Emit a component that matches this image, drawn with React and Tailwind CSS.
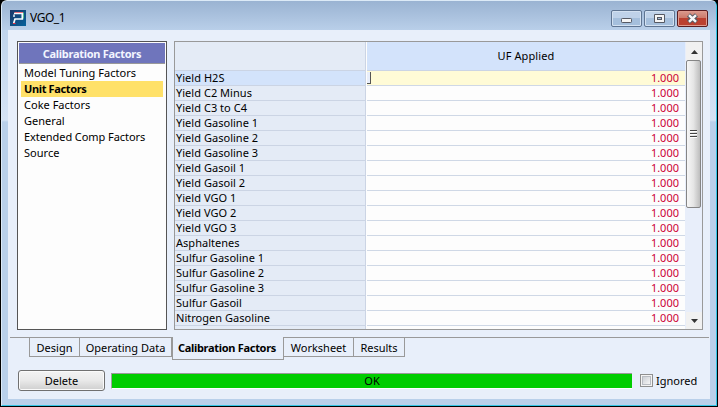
import React from "react";

const sections = [
  { label: "Model Tuning Factors", cls: "tracking-[0.04px]" },
  { label: "Unit Factors", active: true, cls: "font-bold tracking-[-0.36px]" },
  { label: "Coke Factors", cls: "tracking-[0.02px]" },
  { label: "General", cls: "tracking-[0.02px]" },
  { label: "Extended Comp Factors", cls: "tracking-[-0.07px]" },
  { label: "Source", cls: "tracking-[0.02px]" },
];

const rows = [
  "Yield H2S", "Yield C2 Minus", "Yield C3 to C4", "Yield Gasoline 1", "Yield Gasoline 2",
  "Yield Gasoline 3", "Yield Gasoil 1", "Yield Gasoil 2", "Yield VGO 1", "Yield VGO 2",
  "Yield VGO 3", "Asphaltenes", "Sulfur Gasoline 1", "Sulfur Gasoline 2", "Sulfur Gasoline 3",
  "Sulfur Gasoil", "Nitrogen Gasoline",
];

const tabs = [
  { label: "Design", cls: "w-[51px] h-5 pt-[3px] border-l border-t" },
  { label: "Operating Data", cls: "w-[92px] h-5 pt-[3px] border-t" },
  { label: "Calibration Factors", cls: "w-[112px] h-[23px] pt-[4px] pr-[2px] border-l font-bold tracking-[-0.3px]" },
  { label: "Worksheet", cls: "w-[70px] h-5 pt-[3px] border-t" },
  { label: "Results", cls: "w-[51px] h-5 pt-[3px] border-t" },
];

function AppIcon() {
  return (
    <svg width="16" height="16" viewBox="0 0 16 16" className="block">
      <defs>
        <linearGradient id="logo" x1="0" y1="0" x2="1" y2="1">
          <stop offset="0" stopColor="#1b3566" />
          <stop offset="1" stopColor="#06629c" />
        </linearGradient>
      </defs>
      <rect width="16" height="16" fill="url(#logo)" />
      <path d="M4.5 2.5H13" fill="none" stroke="#e84552" strokeWidth="1" />
      <path d="M13.5 2.5V8.5" fill="none" stroke="#3fb27c" strokeWidth="1" />
      <path d="M4 3.5H12.3V9H5L3.6 13.5" fill="none" stroke="#f4fbff" strokeWidth="1.7" />
      <path d="M4 4.5V7" fill="none" stroke="#f4fbff" strokeWidth="1.4" />
      <path d="M3 13.5H5.5" fill="none" stroke="#ee3040" strokeWidth="1" />
    </svg>
  );
}

function TitleBar() {
  const button =
    "flex h-[17px] w-[31px] items-center justify-center rounded-[2px] border border-[#5f7592] bg-linear-to-b from-[#bfd2e9] from-50% to-[#a5bfdc] to-50% shadow-[inset_0_0_0_1px_#d3e1f1]";
  return (
    <div className="flex h-[29px] shrink-0 bg-linear-to-b from-[#9ab3d2] to-[#b9cfe9] pl-[8px]">
      <div className="pt-[9px]"><AppIcon /></div>
      <div className="ml-[4px] mt-[9px] text-[12px] leading-[16px] tracking-[-0.45px]">VGO_1</div>
      <div className="ml-auto mr-[8px] mt-[9px] flex gap-[2px]">
        <div className={button}>
          <svg width="12" height="13" viewBox="0 0 12 13"><rect x="0.5" y="6.5" width="10" height="4" rx="0.8" fill="#f5f5f5" stroke="#555963" /></svg>
        </div>
        <div className={button}>
          <svg width="11" height="13" viewBox="0 0 11 13"><path d="M0.5 2.5H10.5V10.5H0.5Z" fill="#f5f5f5" stroke="#555963" /><rect x="3.5" y="5.5" width="4" height="2" fill="#a9bfdb" stroke="#555963" /></svg>
        </div>
        <div className="flex h-[17px] w-[31px] items-center justify-center rounded-[2px] border border-[#5b1c20] bg-linear-to-b from-[#d99a8e] from-0% via-[#cc7667] via-50% to-[#bb4030] to-50% shadow-[inset_0_0_0_1px_#df9a8d]">
          <svg width="13" height="11" viewBox="0 0 13 11">
            <path d="M2.5 2L10.5 9M10.5 2L2.5 9" stroke="#555963" strokeWidth="4.6" />
            <path d="M3 2.2L10 8.8M10 2.2L3 8.8" stroke="#f7f7f7" strokeWidth="2.5" />
          </svg>
        </div>
      </div>
    </div>
  );
}

function Sidebar() {
  return (
    <div className="h-[289px] w-[150px] border border-[#555] bg-[#fdfdfd] p-px">
      <div className="flex h-[21px] items-center justify-center border-b border-[#999] bg-[#6f75bc] pt-[2px] font-bold tracking-[-0.28px] text-[#f3f5ff]">
        Calibration Factors
      </div>
      <div className="mx-[2px] mt-px">
        {sections.map((s) => (
          <div key={s.label} className={`h-4 whitespace-nowrap pl-[3px] leading-[16px] ${s.cls} ${s.active ? "bg-[#ffe169]" : ""}`}>
            {s.label}
          </div>
        ))}
      </div>
    </div>
  );
}

function ScrollBar() {
  return (
    <div className="flex w-4 flex-col bg-[#e8eefa]">
      <div className="flex h-[18px] items-center justify-center bg-[#f1f1f1] pt-[2px]">
        <svg width="7" height="4" viewBox="0 0 7 4"><path d="M0 4L3.5 0L7 4Z" fill="#333" /></svg>
      </div>
      <div className="flex h-[148px] w-[15px] flex-col items-center justify-center gap-px rounded-[2px] border border-[#858585] bg-linear-to-r from-[#f7f7f7] via-[#e5e5e5] to-[#bdbdbd]">
        <div className="h-[2px] w-[7px] border-t border-[#444] bg-white" />
        <div className="h-[2px] w-[7px] border-t border-[#444] bg-white" />
        <div className="h-[2px] w-[7px] border-t border-[#444] bg-white" />
      </div>
      <div className="mt-auto flex h-[17px] items-center justify-center bg-[#f1f1f1]">
        <svg width="7" height="4" viewBox="0 0 7 4"><path d="M0 0L3.5 4L7 0Z" fill="#333" /></svg>
      </div>
    </div>
  );
}

function FactorTable() {
  return (
    <div className="flex h-[289px] w-[529px] border border-[#999] bg-[#fdfdfd]">
      <div className="w-[191px] shrink-0 overflow-hidden border-r border-[#cbd4e4] bg-[#e4ebf6]">
        <div className="h-[29px] border-b border-[#cbd4e4]" />
        {rows.map((r, i) => (
          <div key={r} className={`h-[15px] whitespace-nowrap border-b border-[#cbd4e4] pl-px leading-[14px] tracking-[0.03px] ${i === 0 ? "bg-[#d3e3fb]" : ""}`}>
            {r}
          </div>
        ))}
      </div>
      <div className="ml-px w-[318px] shrink-0 overflow-hidden">
        <div className="flex h-[29px] items-center justify-center border-b border-[#cbd4e4] bg-[#d3e3fb] tracking-[0.1px]">UF Applied</div>
        {rows.map((r, i) => (
          <div key={r} className={`flex h-[15px] border-b border-[#cfd8e6] pr-[6px] leading-[14px] text-[#cc0036] ${i === 0 ? "bg-[#fffbd6]" : ""}`}>
            {i === 0 && <div className="mt-px h-3 w-1 border-b border-r border-[#555] bg-[#e8eefa]" />}
            <div className="ml-auto">1.000</div>
          </div>
        ))}
      </div>
      <div className="w-px bg-[#e8eefa]" />
      <ScrollBar />
    </div>
  );
}

export default function App() {
  return (
    <div className="h-[407px] w-[718px] overflow-hidden bg-black pl-px font-['Noto_Sans','Open_Sans',sans-serif] text-[11px] leading-[14px] text-black">
      <div className="flex h-[406px] w-[716px] flex-col overflow-hidden rounded-t-[6px] border border-b-[#35c5e5] border-l-[#dceaf7] border-r-[#35c5e5] border-t-[#dceaf7] bg-linear-to-b from-[#b9cfe9] from-0% via-[#d5e3f4] via-[119px] to-[#b9d0ea] to-[121px]">
        <TitleBar />
        <div className="ml-[6px] mr-[6px] flex h-[369px] shrink-0 flex-col bg-[#e8effa]">
          <div className="flex gap-[7px] pl-[9px] pt-[11px]">
            <Sidebar />
            <FactorTable />
          </div>
          <div className="ml-[2px] mr-px mt-[7px] flex h-[23px] shrink-0 items-start">
            <div className="w-[19px] border-t border-[#999]" />
            {tabs.map((t) => (
              <div key={t.label} className={`flex items-start justify-center whitespace-nowrap border-b border-r border-[#999] ${t.cls}`}>
                {t.label}
              </div>
            ))}
            <div className="flex-1 border-t border-[#999]" />
          </div>
          <div className="mt-[10px] flex items-start pl-[10px]">
            <div className="flex h-[21px] w-[87px] items-center justify-center rounded-[3px] border border-[#707070] bg-linear-to-b from-[#f3f3f3] from-0% via-[#e9e9e9] via-50% to-[#cfcfcf] shadow-[inset_0_0_0_1px_#fafafa]">
              Delete
            </div>
            <div className="ml-[6px] mt-[3px] flex h-[16px] w-[521px] items-center justify-center border-b border-l border-t border-b-white border-l-[#a0a0a0] border-t-[#999] bg-[#00cd00]">
              OK
            </div>
            <div className="ml-[8px] mt-[4px] h-[13px] w-[13px] border border-[#8e8f8f] bg-[#f4f4f4] p-px">
              <div className="h-full w-full border border-[#b8bcc2] bg-linear-to-br from-[#ccd0d6] to-[#f6f6f6]" />
            </div>
            <div className="ml-[3px] mt-[4px]">Ignored</div>
          </div>
        </div>
      </div>
    </div>
  );
}
